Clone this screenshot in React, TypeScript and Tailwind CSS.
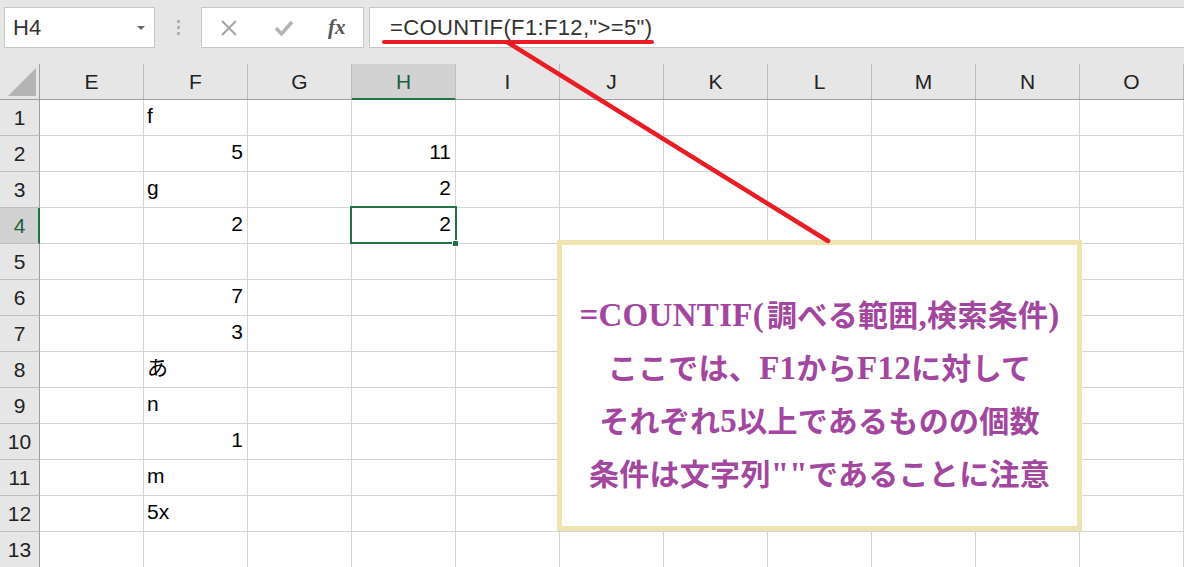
import { FC } from "react";

const cols = ["E", "F", "G", "H", "I", "J", "K", "L", "M", "N", "O"];

type Cell = { v: string; right?: boolean };

// row number -> column letter -> cell
const data: Record<number, Record<string, Cell>> = {
  1: { F: { v: "f" } },
  2: { F: { v: "5", right: true }, H: { v: "11", right: true } },
  3: { F: { v: "g" }, H: { v: "2", right: true } },
  4: { F: { v: "2", right: true }, H: { v: "2", right: true } },
  6: { F: { v: "7", right: true } },
  7: { F: { v: "3", right: true } },
  8: { F: { v: "あ" } },
  9: { F: { v: "n" } },
  10: { F: { v: "1", right: true } },
  11: { F: { v: "m" } },
  12: { F: { v: "5x" } },
};

const rows = Array.from({ length: 13 }, (_, i) => i + 1);

const FormulaBar: FC = () => {
  return (
    <div className="flex h-[64px] items-start bg-[#e6e6e6] pt-[7px] pl-[4px]">
      <div className="flex h-[41px] w-[151px] items-center justify-between border border-[#c6c6c6] bg-white pl-[8px] pr-[9px]">
        <span className="text-[22px] text-[#333]">H4</span>
        <span className="h-0 w-0 border-x-[4px] border-t-[4px] border-x-transparent border-t-[#666]" />
      </div>
      <div className="flex h-[41px] w-[46px] flex-col items-center justify-center gap-[3px]">
        <span className="h-[3px] w-[3px] bg-[#b0b0b0]" />
        <span className="h-[3px] w-[3px] bg-[#b0b0b0]" />
        <span className="h-[3px] w-[3px] bg-[#b0b0b0]" />
      </div>
      <div className="flex h-[41px] w-[163px] items-center border border-[#c6c6c6] bg-white">
        <svg width="18" height="18" viewBox="0 0 18 18" className="ml-[18px]">
          <path d="M2 2 L16 16 M16 2 L2 16" stroke="#a6a6a6" strokeWidth="2" fill="none" />
        </svg>
        <svg width="20" height="18" viewBox="0 0 20 18" className="ml-[36px]">
          <path d="M2 9 L7.5 15 L18 3" stroke="#b4b4b4" strokeWidth="3.5" fill="none" />
        </svg>
        <span className="ml-[34px] font-['Liberation_Serif',serif] text-[21px] font-bold italic text-[#555]">
          fx
        </span>
      </div>
      <div className="ml-[5px] flex h-[41px] flex-1 items-center border border-r-0 border-[#c6c6c6] bg-white pl-[20px]">
        <span className="text-[22px] tracking-[0.35px] text-[#333]">
          =COUNTIF(F1:F12,"&gt;=5")
        </span>
      </div>
    </div>
  );
};

const HeaderRow: FC = () => {
  return (
    <div className="flex h-[36px] border-b border-[#9e9e9e] bg-[#e6e6e6]">
      <div className="relative w-[40px] shrink-0 border-r border-[#9e9e9e]">
        <svg width="30" height="30" viewBox="0 0 30 30" className="absolute left-[8px] top-[4px]">
          <path d="M28 0 L28 28 L0 28 Z" fill="#b4b4b4" />
        </svg>
      </div>
      {cols.map((c) =>
        c === "H" ? (
          <div
            key={c}
            className="-mb-px flex w-[104px] shrink-0 items-center justify-center border-b-2 border-r border-b-[#217346] border-r-[#bdbdbd] bg-[#d2d2d2] pt-[1px] text-[21px] text-[#1e5e3c]"
          >
            {c}
          </div>
        ) : (
          <div
            key={c}
            className="flex w-[104px] shrink-0 items-center justify-center border-r border-[#bdbdbd] pt-[1px] text-[21px] text-[#222]"
          >
            {c}
          </div>
        )
      )}
    </div>
  );
};

const SheetRow: FC<{ n: number }> = ({ n }) => {
  const selected = n === 4;
  return (
    <div className="flex h-[36px]">
      <div
        className={
          selected
            ? "flex w-[40px] shrink-0 items-center justify-center border-b border-r-2 border-b-[#bdbdbd] border-r-[#217346] bg-[#d2d2d2] pl-[1px] text-[21px] text-[#1e5e3c]"
            : "flex w-[40px] shrink-0 items-center justify-center border-b border-r border-b-[#bdbdbd] border-r-[#9e9e9e] bg-[#e6e6e6] text-[21px] text-[#222]"
        }
      >
        {n}
      </div>
      {cols.map((c) => {
        const cell = data[n]?.[c];
        return (
          <div
            key={c}
            className={
              cell?.right
                ? "flex w-[104px] shrink-0 items-end justify-end border-b border-r border-[#d4d4d4] bg-white pb-[4px] pr-[4px] text-[21px] text-black"
                : "flex w-[104px] shrink-0 items-end border-b border-r border-[#d4d4d4] bg-white pb-[4px] pl-[3px] text-[21px] text-black"
            }
          >
            {cell?.v}
          </div>
        );
      })}
    </div>
  );
};

// latin runs inside the note are set a little larger than the kana/kanji
const L: FC<{ children: string }> = ({ children }) => (
  <span className="text-[33px]">{children}</span>
);

const Callout: FC = () => {
  return (
    <div className="absolute left-[557px] top-[240px] flex h-[291px] w-[525px] flex-col items-center justify-center border-[5px] border-[#efe3b0] bg-white pt-[18px] font-['Liberation_Serif','Noto_Sans_CJK_JP',serif] text-[30px] font-bold leading-[52px] tracking-[0.3px] text-[#a3469f]">
      <p>
        <L>=COUNTIF(</L>
        <span className="ml-[3px]">調べる範囲</span>
        <L>,</L>
        検索条件
        <L>)</L>
      </p>
      <p>
        ここでは、<L>F1</L>から<L>F12</L>に対して
      </p>
      <p>
        それぞれ<L>5</L>以上であるものの個数
      </p>
      <p>
        条件は文字列<L>""</L>であることに注意
      </p>
    </div>
  );
};

export default function App() {
  return (
    <div className="relative h-[567px] w-[1184px] overflow-hidden bg-white font-['Liberation_Sans','Noto_Sans_CJK_JP',sans-serif]">
      <FormulaBar />
      <HeaderRow />
      {rows.map((n) => (
        <SheetRow key={n} n={n} />
      ))}

      {/* active cell H4 */}
      <div className="pointer-events-none absolute left-[350px] top-[206px] h-[38px] w-[107px] border-2 border-[#217346]" />
      <div className="pointer-events-none absolute left-[452px] top-[240px] h-[7px] w-[7px] border border-white bg-[#217346]" />

      <Callout />

      <svg
        className="pointer-events-none absolute left-0 top-0"
        width="1184"
        height="567"
        viewBox="0 0 1184 567"
      >
        <line x1="384" y1="42" x2="652" y2="42" stroke="#ec1c24" strokeWidth="4" strokeLinecap="round" />
        <line x1="507" y1="42" x2="828" y2="241" stroke="#ec1c24" strokeWidth="4.5" strokeLinecap="round" />
      </svg>
    </div>
  );
}
